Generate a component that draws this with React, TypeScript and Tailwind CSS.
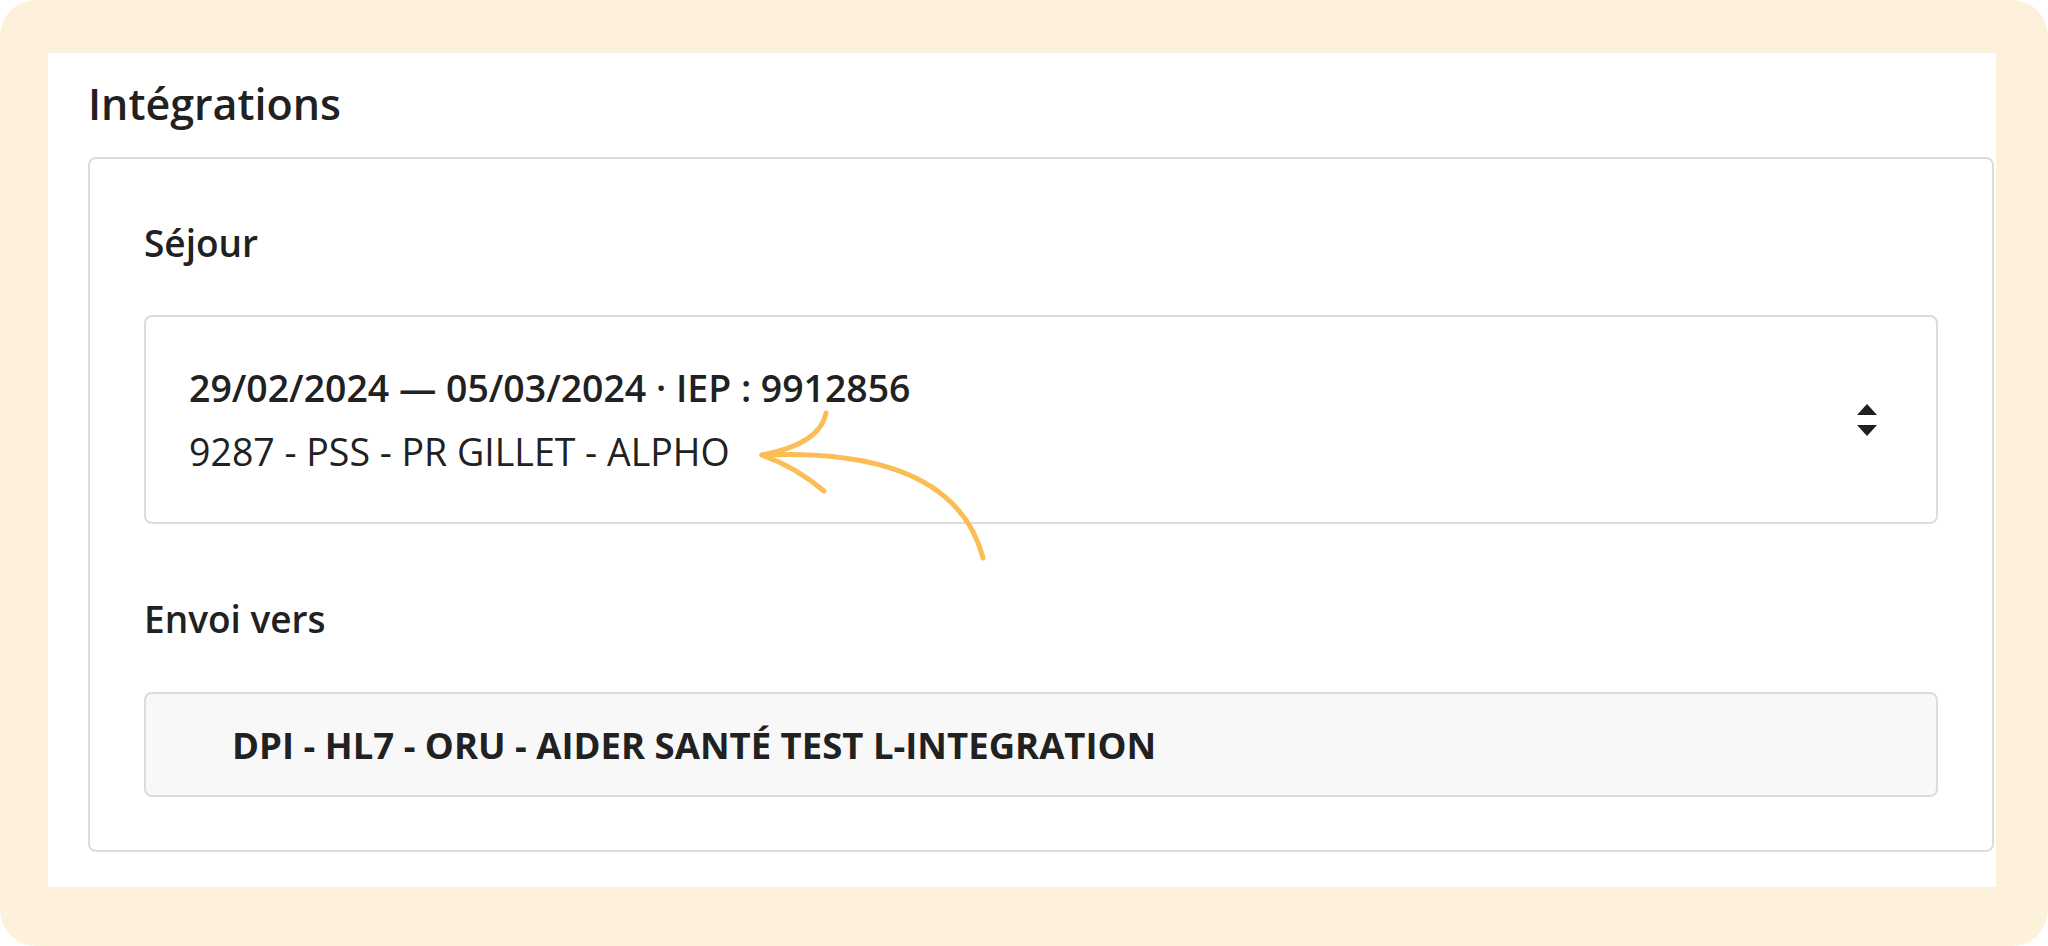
import React from 'react';

const font = { fontFamily: '"Open Sans", "Liberation Sans", sans-serif' };

function SortIcon() {
  return (
    <svg width="20" height="32" viewBox="0 0 20 32" className="shrink-0">
      <path d="M10 0 L20 11 L0 11 Z" fill="#1f1f1f" />
      <path d="M0 21 L20 21 L10 32 Z" fill="#1f1f1f" />
    </svg>
  );
}

function CurvedArrow() {
  return (
    <svg
      className="absolute inset-0 pointer-events-none"
      width="2048"
      height="946"
      viewBox="0 0 2048 946"
      fill="none"
    >
      <g stroke="#fbbd55" strokeWidth="5" strokeLinecap="round" strokeLinejoin="round">
        <path d="M762 455 C 880 450 962 478 983 558" />
        <path d="M826 413 Q 820 444 762 455" />
        <path d="M762 455 Q 796 467 824 491" />
      </g>
    </svg>
  );
}

export default function App() {
  return (
    <div className="relative w-[2048px] h-[946px] bg-white" style={font}>
      <div className="h-full bg-[#fdf1dc] rounded-[36px] pt-[53px] pl-[48px] pr-[52px] pb-[59px]">
        <div className="h-full bg-white pt-[29px] pl-[40px] pr-[2px] text-[#212121]">
          <h2 className="text-[43px] leading-[43px] font-semibold">Intégrations</h2>

          <div className="mt-[32px] border-2 border-[#dcdcdc] rounded-[8px] pt-[66px] pb-[53px] px-[54px]">
            <div className="text-[37px] leading-[36px] font-semibold">Séjour</div>

            <div className="mt-[54px] h-[209px] border-2 border-[#dcdcdc] rounded-[8px] flex items-center justify-between pl-[43px] pr-[59px]">
              <div className="flex flex-col">
                <span className="text-[37.4px] leading-[50px] font-semibold">
                  29/02/2024 — 05/03/2024 · IEP : 9912856
                </span>
                <span className="mt-[14px] text-[37.5px] leading-[50px] font-normal">
                  9287 - PSS - PR GILLET - ALPHO
                </span>
              </div>
              <SortIcon />
            </div>

            <div className="mt-[77px] text-[37px] leading-[36px] font-semibold">Envoi vers</div>

            <div className="mt-[55px] h-[105px] border-2 border-[#dcdcdc] rounded-[8px] bg-[#f8f8f8] flex items-center pl-[86px]">
              <span className="text-[36.5px] leading-[50px] font-bold">
                DPI - HL7 - ORU - AIDER SANTÉ TEST L-INTEGRATION
              </span>
            </div>
          </div>
        </div>
      </div>
      <CurvedArrow />
    </div>
  );
}
